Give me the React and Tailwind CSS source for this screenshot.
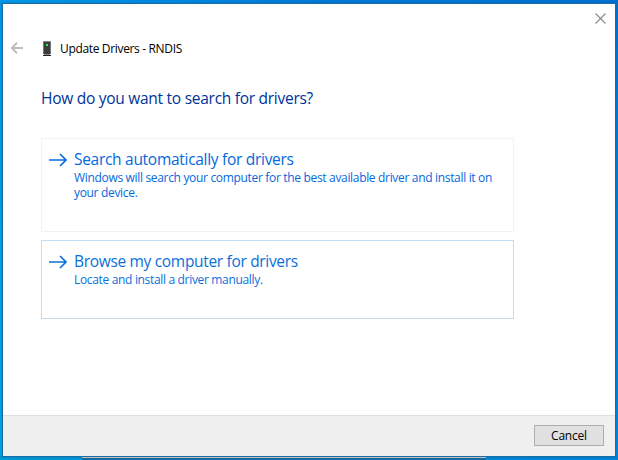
import React from "react";

function ForwardArrow() {
  return (
    <svg width="18" height="14" viewBox="0 0 18 14" fill="none" stroke="#0b6fdc" strokeWidth="1.7" className="block shrink-0">
      <path d="M0 7H17M11 1L17 7L11 13" />
    </svg>
  );
}

export default function App() {
  return (
    <div className="relative h-[460px] w-[618px] overflow-hidden bg-linear-to-b from-[#0074d2] to-[#0088dc] pt-[3px] pl-[2px] font-['Open_Sans','Noto_Sans',sans-serif]">
      <div className="absolute inset-y-0 left-0 w-1 bg-linear-to-b from-[#0096e4] to-[#00a2e4]" />
      <div className="absolute top-0 left-0 h-1 w-full bg-linear-to-r from-[#0098e6] via-[#007bd8] to-[#0070d2]" />
      <div className="absolute bottom-0 left-0 h-1 w-full bg-linear-to-r from-[#0098d6] to-[#0082d6]" />
      <main className="relative flex h-[454px] w-[614px] flex-col border border-[#1b6ba5] bg-white shadow-[0_0_2px_rgba(0,30,60,0.2)]">
        <div className="flex h-[30px] shrink-0 justify-end pt-[9px] pr-[9px]">
          <svg width="11" height="11" viewBox="0 0 11 11" stroke="#888" strokeWidth="1.1" className="block">
            <path d="M.5 .5L10.5 10.5M10.5 .5L.5 10.5" />
          </svg>
        </div>

        <header className="flex h-[30px] shrink-0 items-center pl-2">
          <svg width="12" height="12" viewBox="0 0 12 12" fill="none" stroke="#bdbdbd" strokeWidth="2" className="-mt-0.5 block">
            <path d="M12 6H1M6 .7L.8 6L6 11.3" />
          </svg>
          <svg width="8" height="15" viewBox="0 0 8 15" shapeRendering="crispEdges" className="-mt-[1px] ml-5 block">
            <path d="M0 0H8V1H0Z" fill="#888" />
            <path d="M0 1H1V13H0ZM7 1H8V13H7Z" fill="#777" />
            <path d="M1 1H7V13H1Z" fill="#3c3c3c" />
            <path d="M3 3H5V5H3Z" fill="#35ee45" />
            <path d="M1 13H7V14H1Z" fill="#888" />
            <path d="M0 14H8V15H0Z" fill="#222" />
          </svg>
          <span className="ml-[9px] whitespace-nowrap text-[12px] leading-4 tracking-[-0.34px] text-black">Update Drivers - RNDIS</span>
        </header>

        <section className="flex grow flex-col pt-[24px] pl-[38px]">
          <h1 className="h-[50px] whitespace-nowrap text-[15.5px] leading-5 tracking-[-0.27px] text-[#003399]">How do you want to search for drivers?</h1>
          <button className="flex h-[94px] w-[473px] items-start border border-[#f2f2f2] pt-[14px] pl-[7px] text-left text-[#0568dc]">
            <ForwardArrow />
            <span className="-mt-[4px] ml-[7px] flex flex-col whitespace-nowrap">
              <span className="text-[15.5px] leading-[21px] tracking-[-0.29px]">Search automatically for drivers</span>
              <span className="w-[425px] whitespace-normal text-[12px] leading-[15px] tracking-[-0.325px]">
                Windows will search your computer for the best available driver and install it on your device.
              </span>
            </span>
          </button>
          <button className="mt-2 flex h-[79px] w-[473px] items-start border border-[#c1dcf0] pt-[14px] pl-[7px] text-left text-[#0a70da]">
            <ForwardArrow />
            <span className="-mt-[4px] ml-[7px] flex flex-col whitespace-nowrap">
              <span className="text-[15.5px] leading-[21px] tracking-[-0.32px]">Browse my computer for drivers</span>
              <span className="text-[12px] leading-[15px] tracking-[-0.33px]">Locate and install a driver manually.</span>
            </span>
          </button>
        </section>

        <footer className="flex h-[41px] shrink-0 justify-end border-t border-[#dfdfdf] bg-[#f0f0f0] pt-[9px] pr-[11px]">
          <button className="h-[21px] w-[70px] border border-[#adadad] bg-[#e1e1e1] text-[12px] leading-[19px] tracking-[-0.2px] text-black">Cancel</button>
        </footer>
      </main>
      <div className="absolute bottom-0 left-[82px] h-[3px] w-[404px] bg-[#176a9c]">
        <div className="h-px bg-[#bcbcbc]" />
      </div>
    </div>
  );
}
